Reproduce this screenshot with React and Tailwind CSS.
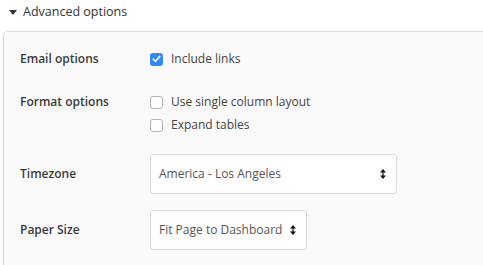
import React from "react";

function Arrows() {
  return (
    <svg width="6" height="10" viewBox="0 0 6 10" className="shrink-0">
      <path d="M3 0 L6 3.5 L0 3.5 Z" fill="#111" />
      <path d="M3 10 L6 6.5 L0 6.5 Z" fill="#111" />
      <rect x="2.4" y="3" width="1.2" height="4" fill="#111" />
    </svg>
  );
}

function Check({ checked }) {
  if (checked) {
    return (
      <span className="w-[13px] h-[13px] rounded-[3px] bg-[#2f8af5] flex items-center justify-center shrink-0">
        <svg width="9" height="8" viewBox="0 0 9 8">
          <path d="M1.2 4.2 L3.5 6.3 L7.8 1.4" stroke="#fff" strokeWidth="1.6" fill="none" strokeLinecap="round" strokeLinejoin="round" />
        </svg>
      </span>
    );
  }
  return <span className="w-[13px] h-[13px] rounded-[3px] border border-[#b5b5b5] bg-white shrink-0" />;
}

export default function App() {
  return (
    <div className="w-[483px] h-[265px] bg-white overflow-hidden text-[12px] text-[#333]" style={{ fontFamily: '"Open Sans", sans-serif' }}>
      <div className="flex items-center h-[24px] pl-[9px]">
        <svg width="8" height="5" viewBox="0 0 8 5" className="mr-[6px]">
          <path d="M0 0 L8 0 L4 5 Z" fill="#333" />
        </svg>
        <span className="text-[12.5px] text-[#333]">Advanced options</span>
      </div>
      <div className="mt-[7px] ml-[3px] w-[500px] h-[300px] border border-[#dcdcdc] rounded-[4px] bg-[#fafafa] pt-[17px] pl-[16px]">
        <div className="flex items-center h-[20px]">
          <div className="w-[130px] font-semibold text-[#3a3a3a]">Email options</div>
          <label className="flex items-center gap-[8px] text-[#444]">
            <Check checked />
            <span>Include links</span>
          </label>
        </div>
        <div className="flex mt-[23px]">
          <div className="w-[130px] h-[20px] flex items-center font-semibold text-[#3a3a3a]">Format options</div>
          <div className="flex flex-col gap-[3px]">
            <label className="flex items-center gap-[8px] h-[20px] text-[#444]">
              <Check />
              <span>Use single column layout</span>
            </label>
            <label className="flex items-center gap-[8px] h-[20px] text-[#444]">
              <Check />
              <span>Expand tables</span>
            </label>
          </div>
        </div>
        <div className="flex items-center mt-[19px]">
          <div className="w-[130px] font-semibold text-[#3a3a3a]">Timezone</div>
          <div className="w-[247px] h-[40px] bg-white border border-[#d9d9d9] rounded-[3px] flex items-center justify-between pl-[8px] pr-[10px] text-[#555]">
            <span>America - Los Angeles</span>
            <Arrows />
          </div>
        </div>
        <div className="flex items-center mt-[16px]">
          <div className="w-[130px] font-semibold text-[#3a3a3a]">Paper Size</div>
          <div className="w-[157px] h-[40px] bg-white border border-[#d9d9d9] rounded-[3px] flex items-center justify-between pl-[8px] pr-[10px] text-[#555] whitespace-nowrap">
            <span>Fit Page to Dashboard</span>
            <Arrows />
          </div>
        </div>
      </div>
    </div>
  );
}
